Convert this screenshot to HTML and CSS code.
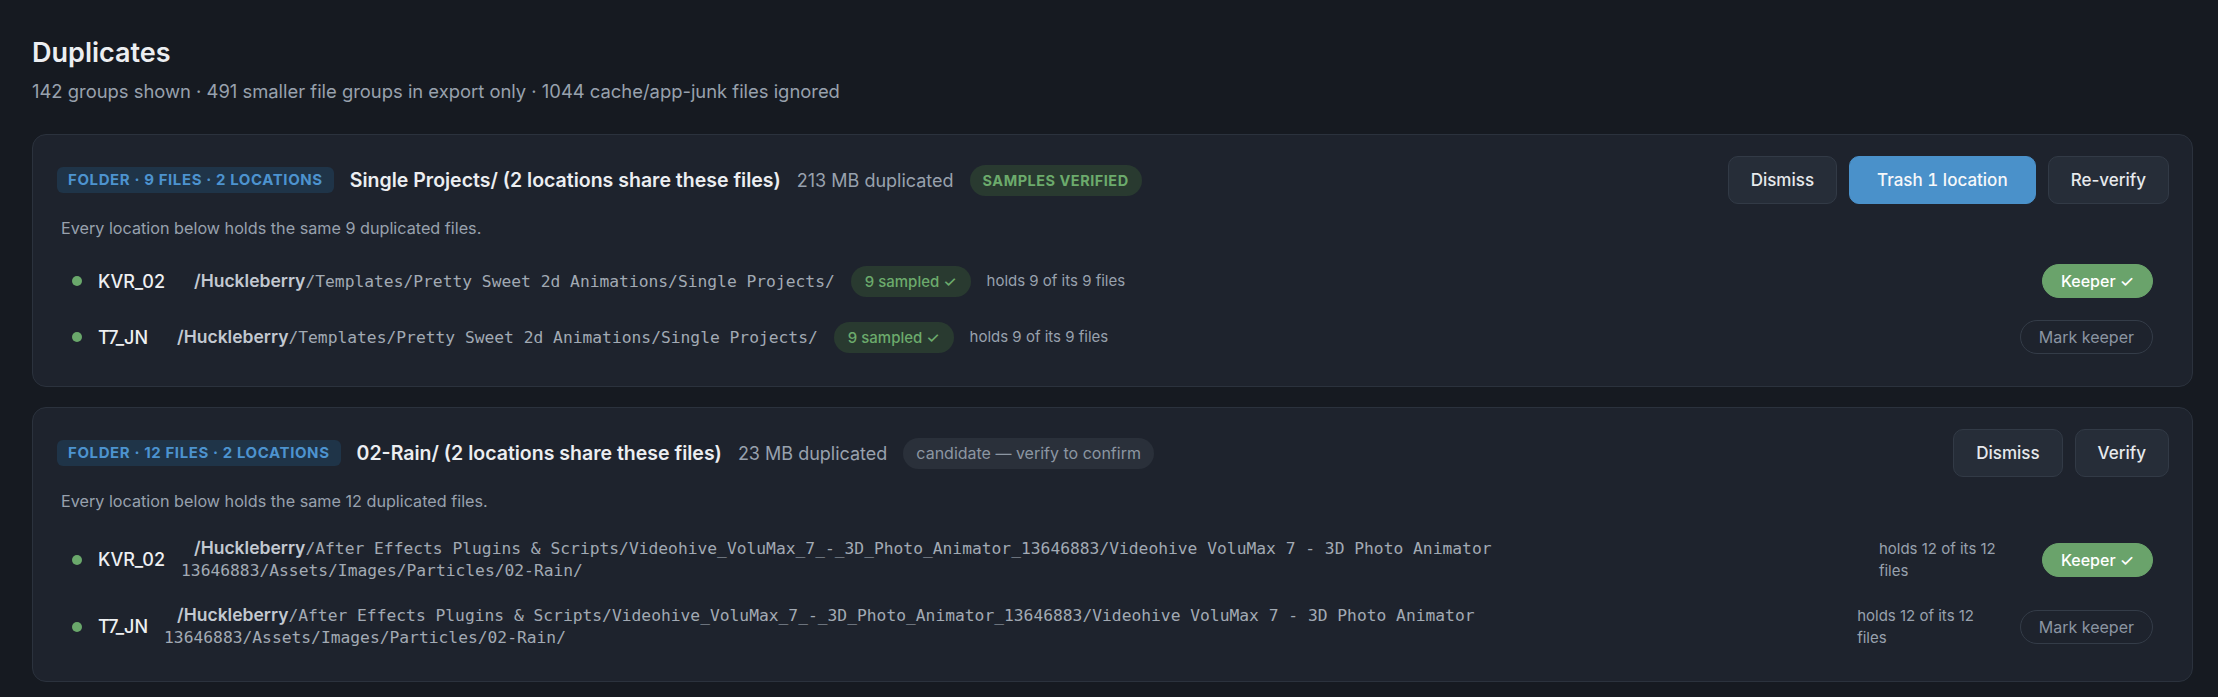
FILE: index.html
```html
<!DOCTYPE html>
<html lang="en">
<head>
<meta charset="utf-8">
<title>Duplicates</title>
<link rel="stylesheet" href="styles.css">
</head>
<body>
<main class="page">
  <header class="page-head">
    <h1 class="page-title">Duplicates</h1>
    <p class="summary">142 groups shown · 491 smaller file groups in export only · 1044 cache/app-junk files ignored</p>
  </header>

  <section class="group">
    <div class="group-head">
      <div class="group-info">
        <span class="kind">FOLDER · 9 FILES · 2 LOCATIONS</span>
        <h2 class="group-title">Single Projects/ (2 locations share these files)</h2>
        <span class="size">213 MB duplicated</span>
        <span class="status status-verified">SAMPLES VERIFIED</span>
      </div>
      <div class="actions">
        <button class="btn">Dismiss</button>
        <button class="btn btn-primary">Trash 1 location</button>
        <button class="btn">Re-verify</button>
      </div>
    </div>
    <p class="group-desc">Every location below holds the same 9 duplicated files.</p>
    <ul class="locations">
      <li class="loc">
        <span class="dot"></span>
        <span class="vol">KVR_02</span>
        <span class="path"><b class="root">/Huckleberry</b>/Templates/Pretty Sweet 2d Animations/Single Projects/</span>
        <span class="sampled">9 sampled ✓</span>
        <span class="holds">holds 9 of its 9 files</span>
        <button class="keep keep-on">Keeper ✓</button>
      </li>
      <li class="loc">
        <span class="dot"></span>
        <span class="vol">T7_JN</span>
        <span class="path"><b class="root">/Huckleberry</b>/Templates/Pretty Sweet 2d Animations/Single Projects/</span>
        <span class="sampled">9 sampled ✓</span>
        <span class="holds">holds 9 of its 9 files</span>
        <button class="keep">Mark keeper</button>
      </li>
    </ul>
  </section>

  <section class="group">
    <div class="group-head">
      <div class="group-info">
        <span class="kind">FOLDER · 12 FILES · 2 LOCATIONS</span>
        <h2 class="group-title">02-Rain/ (2 locations share these files)</h2>
        <span class="size">23 MB duplicated</span>
        <span class="status status-candidate">candidate — verify to confirm</span>
      </div>
      <div class="actions">
        <button class="btn">Dismiss</button>
        <button class="btn">Verify</button>
      </div>
    </div>
    <p class="group-desc">Every location below holds the same 12 duplicated files.</p>
    <ul class="locations">
      <li class="loc">
        <span class="dot"></span>
        <span class="vol">KVR_02</span>
        <span class="path"><b class="root">/Huckleberry</b>/After Effects Plugins &amp; Scripts/Videohive_VoluMax_7_-_3D_Photo_Animator_13646883/Videohive VoluMax 7 - 3D Photo Animator <span class="seg">13646883/Assets/Images/Particles/02-Rain/</span></span>
        <span class="holds">holds 12 of its 12 files</span>
        <button class="keep keep-on">Keeper ✓</button>
      </li>
      <li class="loc">
        <span class="dot"></span>
        <span class="vol">T7_JN</span>
        <span class="path"><b class="root">/Huckleberry</b>/After Effects Plugins &amp; Scripts/Videohive_VoluMax_7_-_3D_Photo_Animator_13646883/Videohive VoluMax 7 - 3D Photo Animator <span class="seg">13646883/Assets/Images/Particles/02-Rain/</span></span>
        <span class="holds">holds 12 of its 12 files</span>
        <button class="keep">Mark keeper</button>
      </li>
    </ul>
  </section>
</main>
</body>
</html>
```

FILE: styles.css
```css
* { box-sizing: border-box; }

html, body {
  margin: 0;
  background: #161a21;
}

body {
  font-family: Inter, Roboto, "Liberation Sans", sans-serif;
  color: #e7e9ec;
}

.page {
  padding: 36px 25px 20px 32px;
  display: flex;
  flex-direction: column;
}

.page-head {
  margin-bottom: 31px;
}

.page-title {
  margin: 0;
  font-size: 27px;
  line-height: 34px;
  font-weight: 600;
  color: #eceef1;
}

.summary {
  margin: 9px 0 0;
  font-size: 18.4px;
  line-height: 24px;
  color: #98a1ad;
}

.group {
  background: #1e232d;
  border: 1px solid #2b323d;
  border-radius: 14px;
  padding: 21px 23px 21px 24px;
  margin-bottom: 20px;
}

.group-head {
  display: flex;
  align-items: center;
  justify-content: space-between;
  min-height: 48px;
}

.group-info {
  display: flex;
  align-items: center;
  gap: 16px;
}

.kind {
  background: #1f3448;
  color: #4d93cf;
  font-size: 15px;
  font-weight: 700;
  letter-spacing: 0.6px;
  line-height: 26px;
  padding: 0 11px;
  border-radius: 6px;
}

.group-title {
  margin: 0;
  font-size: 19.5px;
  font-weight: 600;
  line-height: 26px;
  color: #eceef1;
}

.size {
  font-size: 18px;
  color: #98a1ad;
}

.status {
  line-height: 31px;
  padding: 0 13px;
  border-radius: 16px;
  font-size: 14px;
}

.status-verified {
  background: #293a30;
  color: #6cab6c;
  font-size: 14.5px;
  font-weight: 700;
  letter-spacing: 0.5px;
}

.status-candidate {
  background: #2a303a;
  color: #8c96a2;
  font-size: 16px;
}

.actions {
  display: flex;
  gap: 12px;
}

.btn {
  font-family: inherit;
  font-size: 17px;
  font-weight: 500;
  height: 48px;
  padding: 0 22px;
  border-radius: 10px;
  border: 1px solid #323a46;
  background: #262d38;
  color: #e7e9ec;
}

.btn-primary {
  background: #4a91ca;
  border-color: #4a91ca;
  color: #f6f8fa;
  padding: 0 27px;
  font-variant-numeric: tabular-nums;
}

.group-desc {
  margin: 14px 0 15px 4px;
  font-size: 16.2px;
  line-height: 20px;
  color: #98a1ad;
}

.locations {
  margin: 0;
  padding: 0;
  list-style: none;
}

.loc {
  display: flex;
  align-items: center;
  gap: 16px;
  padding: 11px 16px 11px 15px;
}

.dot {
  flex: none;
  width: 10px;
  height: 10px;
  border-radius: 50%;
  background: #6aa86b;
}

.vol {
  flex: none;
  font-size: 18px;
  font-weight: 500;
  color: #eef0f2;
}

.path {
  flex: 0 1 auto;
  font-family: "DejaVu Sans Mono", "Liberation Mono", monospace;
  font-size: 16.3px;
  line-height: 22px;
  color: #a2aab4;
  text-indent: 13px;
}

.root {
  font-family: Inter, Roboto, "Liberation Sans", sans-serif;
  font-weight: 600;
  font-size: 17.5px;
  color: #c3c9d1;
}

.seg {
  white-space: nowrap;
}

.sampled {
  flex: none;
  background: #293a30;
  color: #6cab6c;
  font-size: 15px;
  font-weight: 500;
  line-height: 31px;
  padding: 0 14px;
  border-radius: 16px;
}

.holds {
  flex: 0 1 auto;
  font-size: 15px;
  line-height: 22px;
  color: #98a1ad;
}

.keep {
  flex: none;
  margin-left: auto;
  font-family: inherit;
  font-size: 16px;
  height: 34px;
  padding: 0 18px;
  border-radius: 17px;
  border: 1px solid #343c48;
  background: transparent;
  color: #8b95a2;
}

.keep-on {
  background: #6aa36b;
  border-color: #6aa36b;
  color: #ffffff;
  font-weight: 500;
}
```
